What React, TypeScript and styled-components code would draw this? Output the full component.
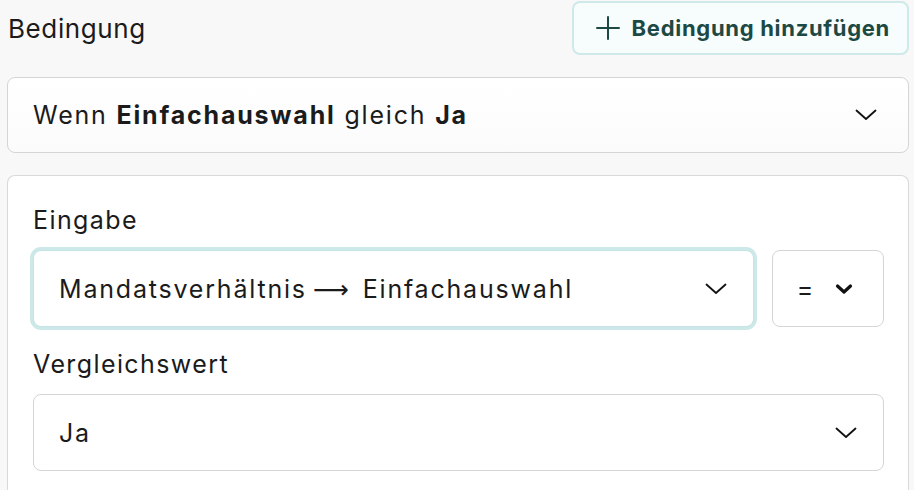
import React from "react";
import styled, { createGlobalStyle } from "styled-components";

const Global = createGlobalStyle`
  html, body { margin: 0; padding: 0; }
  body {
    background: #f8f8f8;
    font-family: "Inter", "Open Sans", sans-serif;
    color: #1b1b1b;
    -webkit-font-smoothing: antialiased;
  }
`;

const Page = styled.div`
  width: 914px;
  height: 490px;
  overflow: hidden;
  box-sizing: border-box;
  padding: 1px 5px 0 7px;
  display: flex;
  flex-direction: column;
`;

const Header = styled.div`
  display: flex;
  align-items: center;
  justify-content: space-between;
  height: 54px;
`;

const Title = styled.h2`
  margin: 0 0 0 1px;
  font-size: 26px;
  font-weight: 400;
  letter-spacing: 0.6px;
  color: #1b1b1b;
`;

const AddButton = styled.button`
  display: flex;
  align-items: center;
  gap: 11px;
  height: 54px;
  box-sizing: border-box;
  padding: 0 17px 0 21px;
  border: 2px solid #cfe8e8;
  border-radius: 8px;
  background: #f7fdfd;
  color: #1d4944;
  font-family: inherit;
  font-size: 22px;
  font-weight: 700;
  letter-spacing: 0.7px;
  cursor: pointer;
`;

const Summary = styled.div`
  margin-top: 22px;
  height: 76px;
  flex-shrink: 0;
  box-sizing: border-box;
  border: 1.5px solid #d5d5d5;
  border-radius: 8px;
  background: linear-gradient(#ffffff, #fbfbfb);
  display: flex;
  align-items: center;
  justify-content: space-between;
  padding: 0 31px 0 25px;
  font-size: 25px;
  letter-spacing: 1.8px;
`;

const SummaryText = styled.span`
  b { font-weight: 700; }
`;

const Panel = styled.div`
  margin-top: 22px;
  flex: 1;
  box-sizing: border-box;
  border: 1.5px solid #d9d9d9;
  border-bottom: none;
  border-radius: 8px 8px 0 0;
  background: #ffffff;
  padding: 28px 24px 0 25px;
  display: flex;
  flex-direction: column;
`;

const Label = styled.div`
  font-size: 25px;
  line-height: 32px;
  letter-spacing: 1.4px;
  margin-bottom: 14px;
`;

const Row = styled.div`
  display: flex;
  gap: 18px;
  margin-bottom: 21px;
`;

const Select = styled.div<{ $focused?: boolean }>`
  flex: 1;
  height: 77px;
  box-sizing: border-box;
  border-radius: 8px;
  border: ${(p) => (p.$focused ? "1.5px solid #c6e4e4" : "1.5px solid #d5d5d5")};
  box-shadow: ${(p) => (p.$focused ? "0 0 0 3px #cde8e8" : "none")};
  background: #fff;
  display: flex;
  align-items: center;
  justify-content: space-between;
  padding: 0 26px 0 25px;
  font-size: 25px;
  letter-spacing: 1.8px;
`;

const Arrow = styled.span`
  font-family: "DejaVu Sans", sans-serif;
  letter-spacing: 0;
  margin: 0 14px 0 6px;
`;

const OpSelect = styled.div`
  width: 112px;
  height: 77px;
  box-sizing: border-box;
  border-radius: 8px;
  border: 1.5px solid #d5d5d5;
  background: #fff;
  display: flex;
  align-items: center;
  justify-content: center;
  gap: 22px;
  padding-right: 6px;
  font-size: 25px;
`;

const Chevron = ({ bold }: { bold?: boolean }) => (
  <svg
    width={bold ? 18 : 22}
    height={12}
    viewBox={bold ? "0 0 18 12" : "0 0 22 12"}
    fill="none"
    stroke="#111"
    strokeWidth={bold ? 3.2 : 1.8}
    strokeLinecap="round"
    strokeLinejoin="round"
  >
    {bold ? <path d="M2.5 3 L9 9 L15.5 3" /> : <path d="M1.5 1.5 L11 10 L20.5 1.5" />}
  </svg>
);

const Plus = () => (
  <svg width="26" height="26" viewBox="0 0 26 26" fill="none" stroke="#1d4944" strokeWidth="2" strokeLinecap="round">
    <path d="M13 2 V24 M2 13 H24" />
  </svg>
);

export default function App() {
  return (
    <>
      <Global />
      <Page>
        <Header>
          <Title>Bedingung</Title>
          <AddButton>
            <Plus />
            Bedingung hinzufügen
          </AddButton>
        </Header>
        <Summary>
          <SummaryText>
            Wenn <b>Einfachauswahl</b> gleich <b>Ja</b>
          </SummaryText>
          <Chevron />
        </Summary>
        <Panel>
          <Label>Eingabe</Label>
          <Row>
            <Select $focused>
              <span>
                Mandatsverhältnis<Arrow>⟶</Arrow>Einfachauswahl
              </span>
              <Chevron />
            </Select>
            <OpSelect>
              <span>=</span>
              <Chevron bold />
            </OpSelect>
          </Row>
          <Label>Vergleichswert</Label>
          <Row>
            <Select>
              <span>Ja</span>
              <Chevron />
            </Select>
          </Row>
        </Panel>
      </Page>
    </>
  );
}
